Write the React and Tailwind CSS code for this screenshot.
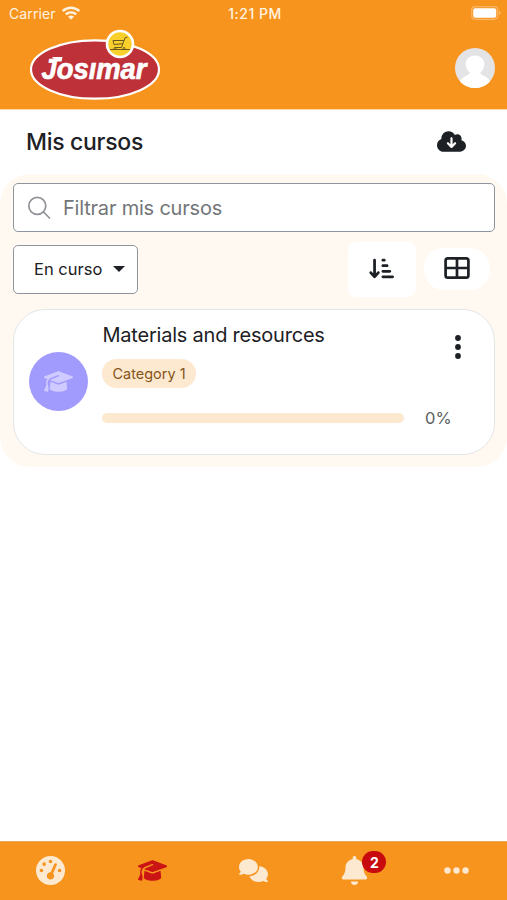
import {
  FaArrowDownShortWide,
  FaBell,
  FaCloudArrowDown,
  FaComments,
  FaEllipsis,
  FaGaugeHigh,
  FaGraduationCap,
} from 'react-icons/fa6'

const tabs = [
  { id: 'dashboard', Icon: FaGaugeHigh },
  { id: 'courses', Icon: FaGraduationCap, active: true },
  { id: 'messages', Icon: FaComments },
  { id: 'notifications', Icon: FaBell, badge: 2 },
  { id: 'more', Icon: FaEllipsis },
]

function StatusBar() {
  return (
    <div className="grid grid-cols-3 items-center h-7 pl-[9px] pr-[6px] text-[#fff3e0]">
      <div className="flex items-center gap-[6px]">
        <span className="text-[14px] leading-none tracking-[0.1px]">Carrier</span>
        <svg className="-mt-[2px] w-[18px] h-[14px]" viewBox="0 0 18 14" fill="none" stroke="currentColor" strokeWidth="2.4">
          <path d="M0.8 5C5.4.7 12.6.7 17.2 5" />
          <path d="M3.8 8.4c2.9-2.7 7.5-2.7 10.4 0" />
          <path d="M6 10.6c1.7-1.5 4.3-1.5 6 0L9 13.8z" fill="currentColor" stroke="none" />
        </svg>
      </div>
      <span className="text-center text-[14px] leading-none font-medium tracking-[0.5px]">1:21 PM</span>
      <svg className="-mt-[2px] justify-self-end w-[30px] h-[14px]" viewBox="0 0 30 14">
        <rect x="0.7" y="0.7" width="26" height="12.6" rx="3.5" fill="none" stroke="#fab566" strokeWidth="1.2" />
        <rect x="2.2" y="2.2" width="23" height="9.6" rx="2" fill="#fff" />
        <path d="M28.2 5v4c1.6-.6 1.6-3.4 0-4z" fill="#fbc98c" />
      </svg>
    </div>
  )
}

function Logo() {
  return (
    <svg className="mt-px w-[132px] h-[72px]" viewBox="0 0 132 72">
      <ellipse cx="66" cy="40.5" rx="64" ry="29.2" fill="#be3138" stroke="#fff" strokeWidth="2.2" />
      <text
        x="12.5"
        y="50"
        textLength="105"
        lengthAdjust="spacingAndGlyphs"
        fill="#fff"
        stroke="#fff"
        strokeWidth="0.7"
        className="font-['Liberation_Sans',sans-serif] font-bold italic text-[29px]"
      >
        Josımar
      </text>
      {/* bar on top of the J */}
      <path d="M23.5 28h10l-1 4.600h-6.500c0-2-.8-3-2.500-3.600z" fill="#fff" />
      <circle cx="91" cy="15" r="13" fill="#f9cf2b" stroke="#fff" strokeWidth="2.6" />
      <g fill="none" stroke="#6b581c" strokeWidth="1">
        <path d="M98.5 8l-2.5.8-3.5 9.700H86M95 11.500H84l1 4 9-.8M81 20.500h20" />
        <circle cx="86" cy="19.5" r="1" />
        <circle cx="95" cy="19.5" r="1" />
      </g>
    </svg>
  )
}

function Avatar() {
  return (
    <svg className="w-10 h-10 rounded-full" viewBox="0 0 40 40">
      <rect width="40" height="40" fill="#e4e4e6" />
      <path
        d="M20 7.5c-5.500 0-9.300 3.700-9.300 8.500 0 3.500 1.500 6.500 4 8.500 0 1.500-2 2.300-4.500 3.700C7 30 4.500 32.500 3.500 35v5h33v-5c-1-2.500-3.500-5-6.700-6.800-2.500-1.400-4.500-2.200-4.500-3.700 2.500-2 4-5 4-8.500 0-4.800-3.800-8.500-9.300-8.500z"
        fill="#fff"
      />
    </svg>
  )
}

function GridIcon() {
  return (
    <svg className="h-[22px] w-[26px]" viewBox="0 0 26 22" fill="none" stroke="currentColor" strokeWidth="2.7">
      <rect x="1.6" y="1.4" width="22.8" height="19.2" rx="2.2" />
      <path d="M13 1.4v19.2M1.6 11h22.8" />
    </svg>
  )
}

function KebabIcon() {
  return (
    <svg className="mt-[25px] mr-[4px] h-6 w-[6px]" viewBox="0 0 6 24" fill="currentColor">
      <circle cx="3" cy="3" r="2.9" />
      <circle cx="3" cy="12" r="2.9" />
      <circle cx="3" cy="21" r="2.9" />
    </svg>
  )
}

function Header() {
  return (
    <header className="h-[110px] bg-[#f7941d] border-b border-[#fbd9ac]">
      <StatusBar />
      <div className="flex items-start justify-between pl-[29px] pr-3">
        <Logo />
        <div className="pt-5">
          <Avatar />
        </div>
      </div>
    </header>
  )
}

function CourseCard({ title, category, progress }) {
  return (
    <article className="flex h-[146px] rounded-[32px] border border-[#e3e5e8] bg-white pl-[15px] pr-[29px]">
      <div className="mt-[42px] flex h-[59px] w-[59px] shrink-0 items-center justify-center rounded-full bg-[#a29bfe]">
        <FaGraduationCap className="h-[29px] w-[29px] text-[#cfcaff]" />
      </div>
      <div className="ml-[14px] flex-1">
        <div className="flex h-[51px] justify-between">
          <h2 className="mt-[11px] pl-[0.5px] text-[20px] leading-[28px] tracking-[-0.22px]">{title}</h2>
          <KebabIcon />
        </div>
        <span className="-mt-[2px] flex h-[29px] w-[94px] items-center justify-center rounded-full bg-[#fde8d0] text-[14.5px] text-[#85551a]">
          {category}
        </span>
        <div className="mt-[18px] flex items-center">
          <div className="h-[10px] w-[302px] overflow-hidden rounded-full bg-[#fde8d0]">
            <div className="h-full bg-[#f7941d]" style={{ width: `${progress}%` }} />
          </div>
          <span className="ml-[21px] text-[16.5px] leading-6 text-[#5c5f62]">{progress}%</span>
        </div>
      </div>
    </article>
  )
}

function TabBar() {
  return (
    <nav className="grid h-[59px] grid-cols-5 border-t border-[#e5a75a] bg-[#f7941d] pb-px">
      {tabs.map(({ id, Icon, active, badge }) => (
        <div key={id} className="flex items-center justify-center">
          <div className="relative">
            <Icon className={`h-[29px] w-[29px] ${active ? 'text-[#cb1515]' : 'text-[#fde8d0]'}`} />
            {badge && (
              <span className="absolute -top-[5px] left-[22px] flex h-[22px] w-[24px] items-center justify-center rounded-full bg-[#c80a0e] text-[14px] font-bold text-white">
                {badge}
              </span>
            )}
          </div>
        </div>
      ))}
    </nav>
  )
}

export default function App() {
  return (
    <div className="flex h-[900px] w-full flex-col bg-white font-['Inter',sans-serif] text-[#1d2125]">
      <Header />
      <main className="flex-1">
        <div className="flex h-16 items-center justify-between pl-[26px] pr-[41px]">
          <h1 className="text-[23px] font-medium tracking-[-0.3px]">Mis cursos</h1>
          <FaCloudArrowDown className="mb-[2px] h-[29px] w-[29px]" />
        </div>
        <section className="rounded-[30px] bg-[#fff9f1] px-[13px] pt-[9px] pb-3">
          <div className="-mr-px flex h-[49px] items-center rounded-[5px] border border-[#8f959e] bg-white pl-[13px]">
            <svg className="h-6 w-6" viewBox="0 0 24 24" fill="none" stroke="#8f9296" strokeWidth="1.7">
              <circle cx="10.3" cy="9.8" r="8.5" />
              <path d="M16.500 16l6 6" strokeLinecap="round" />
            </svg>
            <span className="ml-3 text-[20px] tracking-[-0.2px] text-[#737679]">Filtrar mis cursos</span>
          </div>
          <div className="mt-[9px] flex h-[56px] items-center">
            <div className="flex h-[49px] w-[125px] items-center rounded-[5px] border border-[#8f959e] bg-white pl-5 text-[16.5px]">
              <span>En curso</span>
              <svg className="ml-[11px] h-[6px] w-3" viewBox="0 0 12 6" fill="currentColor">
                <path d="M0 0h12L6 6z" />
              </svg>
            </div>
            <div className="ml-auto flex h-[55px] w-[68px] items-center justify-center rounded-lg bg-white pr-[2px] pb-[2px]">
              <FaArrowDownShortWide className="h-[25px] w-[25px]" />
            </div>
            <div className="ml-[8px] flex h-[42px] w-[66px] items-center justify-center rounded-[20px] bg-white pb-[2px]">
              <GridIcon />
            </div>
            <div className="w-1" />
          </div>
          <div className="-mr-px mt-[12px]">
            <CourseCard title="Materials and resources" category="Category 1" progress={0} />
          </div>
        </section>
      </main>
      <TabBar />
    </div>
  )
}
